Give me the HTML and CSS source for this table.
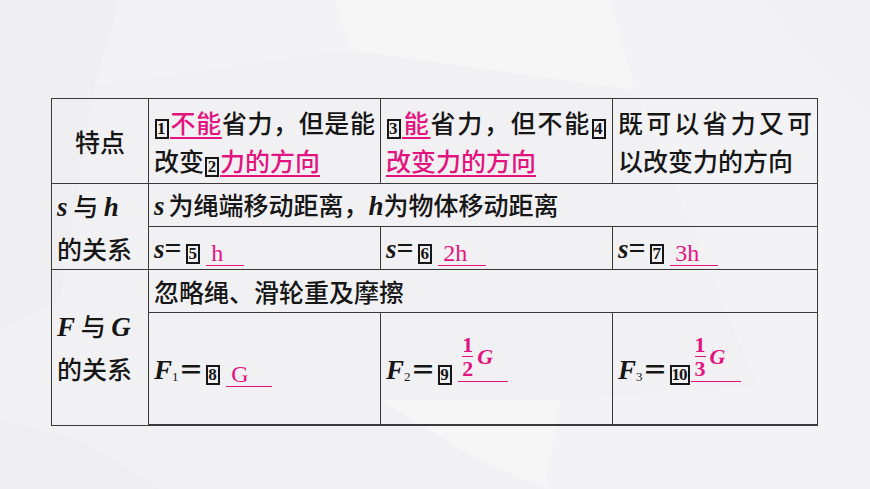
FILE: index.html
```html
<!DOCTYPE html>
<html lang="zh">
<head>
<meta charset="utf-8">
<link rel="stylesheet" href="styles.css">
</head>
<body>
<div class="page">
  <svg class="bg" width="870" height="489" viewBox="0 0 870 489" aria-hidden="true">
    <rect width="870" height="489" fill="#f1f1f3"/>
    <polygon points="0,0 120,0 95,85 0,60" fill="#efeff1"/>
    <polygon points="120,0 335,0 350,50 95,85" fill="#f3f3f5"/>
    <polygon points="335,0 610,0 635,90 350,50" fill="#f6f6f7"/>
    <polygon points="610,0 760,0 870,120 870,489 800,489 635,90" fill="#f3f3f5"/>
    <polygon points="0,60 95,85 60,300 0,330" fill="#efeff1"/>
    <polygon points="380,400 560,400 545,489 470,455" fill="#f6f6f7"/>
    <polygon points="0,420 80,440 160,489 0,489" fill="#eeeef0"/>
    <polygon points="560,400 870,380 870,489 545,489" fill="#f3f3f5"/>
  </svg>
  <table class="grid">
    <colgroup>
      <col class="c1"><col class="c2"><col class="c3"><col class="c4">
    </colgroup>
    <tr class="r1">
      <td class="hd mid">特点</td>
      <td>
        <span class="jl"><span class="box">1</span><span class="ans">不能</span>省力，但是能</span>
        <span class="ln">改变<span class="box">2</span><span class="ans">力的方向</span></span>
      </td>
      <td>
        <span class="jl"><span class="box">3</span><span class="ans">能</span>省力，但不能<span class="box">4</span></span>
        <span class="ln"><span class="ans">改变力的方向</span></span>
      </td>
      <td>
        <span class="jl">既可以省力又可</span>
        <span class="ln">以改变力的方向</span>
      </td>
    </tr>
    <tr class="r2">
      <td rowspan="2" class="hd">
        <span class="hl"><i class="v">s</i> 与 <i class="v">h</i></span>
        <span class="hl">的关系</span>
      </td>
      <td colspan="3"><i class="v sp">s</i>为绳端移动距离，<i class="v">h</i>为物体移动距离</td>
    </tr>
    <tr class="r3">
      <td><i class="v">s</i><span class="eq">=</span><span class="box">5</span> <span class="blank w1">h</span></td>
      <td><i class="v">s</i><span class="eq">=</span><span class="box">6</span> <span class="blank w2">2h</span></td>
      <td><i class="v">s</i><span class="eq">=</span><span class="box">7</span> <span class="blank w2">3h</span></td>
    </tr>
    <tr class="r4">
      <td rowspan="2" class="hd">
        <span class="hl"><i class="v">F</i> 与 <i class="v">G</i></span>
        <span class="hl">的关系</span>
      </td>
      <td colspan="3">忽略绳、滑轮重及摩擦</td>
    </tr>
    <tr class="r5">
      <td><i class="v">F</i><sub class="sb">1</sub><span class="feq">＝</span><span class="box">8</span> <span class="blank w3">G</span></td>
      <td><i class="v">F</i><sub class="sb">2</sub><span class="feq">＝</span><span class="box">9</span> <span class="fans"><span class="frac"><span class="num">1</span><span class="den">2</span></span><i class="fg">G</i></span></td>
      <td><i class="v">F</i><sub class="sb">3</sub><span class="feq">＝</span><span class="box wide">10</span><span class="fans"><span class="frac"><span class="num">1</span><span class="den">3</span></span><i class="fg">G</i></span></td>
    </tr>
  </table>
</div>
</body>
</html>
```
FILE: styles.css
```css
html, body {
  margin: 0;
  padding: 0;
}
body {
  width: 870px;
  height: 489px;
  overflow: hidden;
  font-family: "Noto Sans CJK SC", "Noto Sans", sans-serif;
  color: #161616;
}
.page {
  position: relative;
  width: 870px;
  height: 489px;
  padding: 98px 0 0 51px;
  box-sizing: border-box;
}
.bg {
  position: absolute;
  left: 0;
  top: 0;
  z-index: 0;
}
.grid {
  position: relative;
  z-index: 1;
  border-collapse: collapse;
  table-layout: fixed;
  width: 766px;
  font-size: 25px;
  font-weight: 500;
  line-height: 38px;
}
.c1 { width: 97px; }
.c2 { width: 232px; }
.c3 { width: 232px; }
.c4 { width: 205px; }
.grid td {
  border: 1px solid #3a3a3a;
  padding: 0 5px 0 5px;
  vertical-align: middle;
  text-align: left;
  white-space: nowrap;
}
.grid tr:last-child td { border-bottom: 2px solid #3a3a3a; }
.r1 td { height: 84px; }
.r2 td, .r3 td, .r4 td { height: 42px; }
.r5 td { height: 111px; }
.hd.mid { text-align: center; }
.jl, .ln, .hl {
  display: block;
}
.jl {
  text-align: justify;
  text-align-last: justify;
}
.hl { line-height: 41px; }
.ans {
  color: #e3147f;
  text-decoration: underline;
  text-decoration-thickness: 1.5px;
  text-underline-offset: 4px;
}
.v {
  font-family: "Liberation Serif", serif;
  font-style: italic;
  font-weight: 700;
  font-size: 27px;
}
.v.sp { margin-right: 4px; }
.eq {
  font-family: "Liberation Serif", serif;
  font-weight: 700;
  font-size: 30px;
  margin-right: 3px;
}
.feq {
  font-weight: 700;
  margin: 0 1px 0 0;
}
.sb {
  font-family: "Liberation Serif", serif;
  font-size: 13px;
  font-weight: 400;
  vertical-align: -2px;
  line-height: 0;
  margin-left: 0;
}
.box {
  display: inline-block;
  width: 10px;
  height: 16px;
  border: 2px solid #161616;
  font-family: "Liberation Serif", serif;
  font-weight: 700;
  font-size: 17px;
  line-height: 16px;
  text-align: center;
  vertical-align: -1px;
  margin: 0 1px;
}
.box.wide {
  width: auto;
  padding: 0 1px 0 0;
  letter-spacing: -1px;
}
.blank {
  display: inline-block;
  font-family: "Liberation Serif", serif;
  font-weight: 400;
  font-size: 24px;
  line-height: 24px;
  color: #e3147f;
  border-bottom: 1.5px solid #e3147f;
  padding-left: 5px;
  box-sizing: border-box;
  vertical-align: -3px;
}
.w1 { width: 38px; }
.w2 { width: 48px; }
.w3 { width: 46px; }
.fans {
  display: inline-block;
  border-bottom: 1.5px solid #e3147f;
  width: 50px;
  padding-left: 1px;
  box-sizing: border-box;
  color: #e3147f;
  font-family: "Liberation Serif", serif;
  font-weight: 700;
  line-height: 20px;
  vertical-align: 3px;
  padding-bottom: 2px;
  margin-top: -40px;
}
.frac {
  display: inline-block;
  font-size: 22px;
  text-align: center;
  vertical-align: baseline;
}
.num {
  display: block;
  border-bottom: 1px solid #e3147f;
  line-height: 20px;
  padding: 0 0 1px 0;
  margin: 0 3px;
}
.den {
  display: block;
  line-height: 20px;
  padding-top: 2px;
}
.fg {
  font-size: 22px;
  font-style: italic;
  vertical-align: 12px;
  margin-left: 1px;
}
```
